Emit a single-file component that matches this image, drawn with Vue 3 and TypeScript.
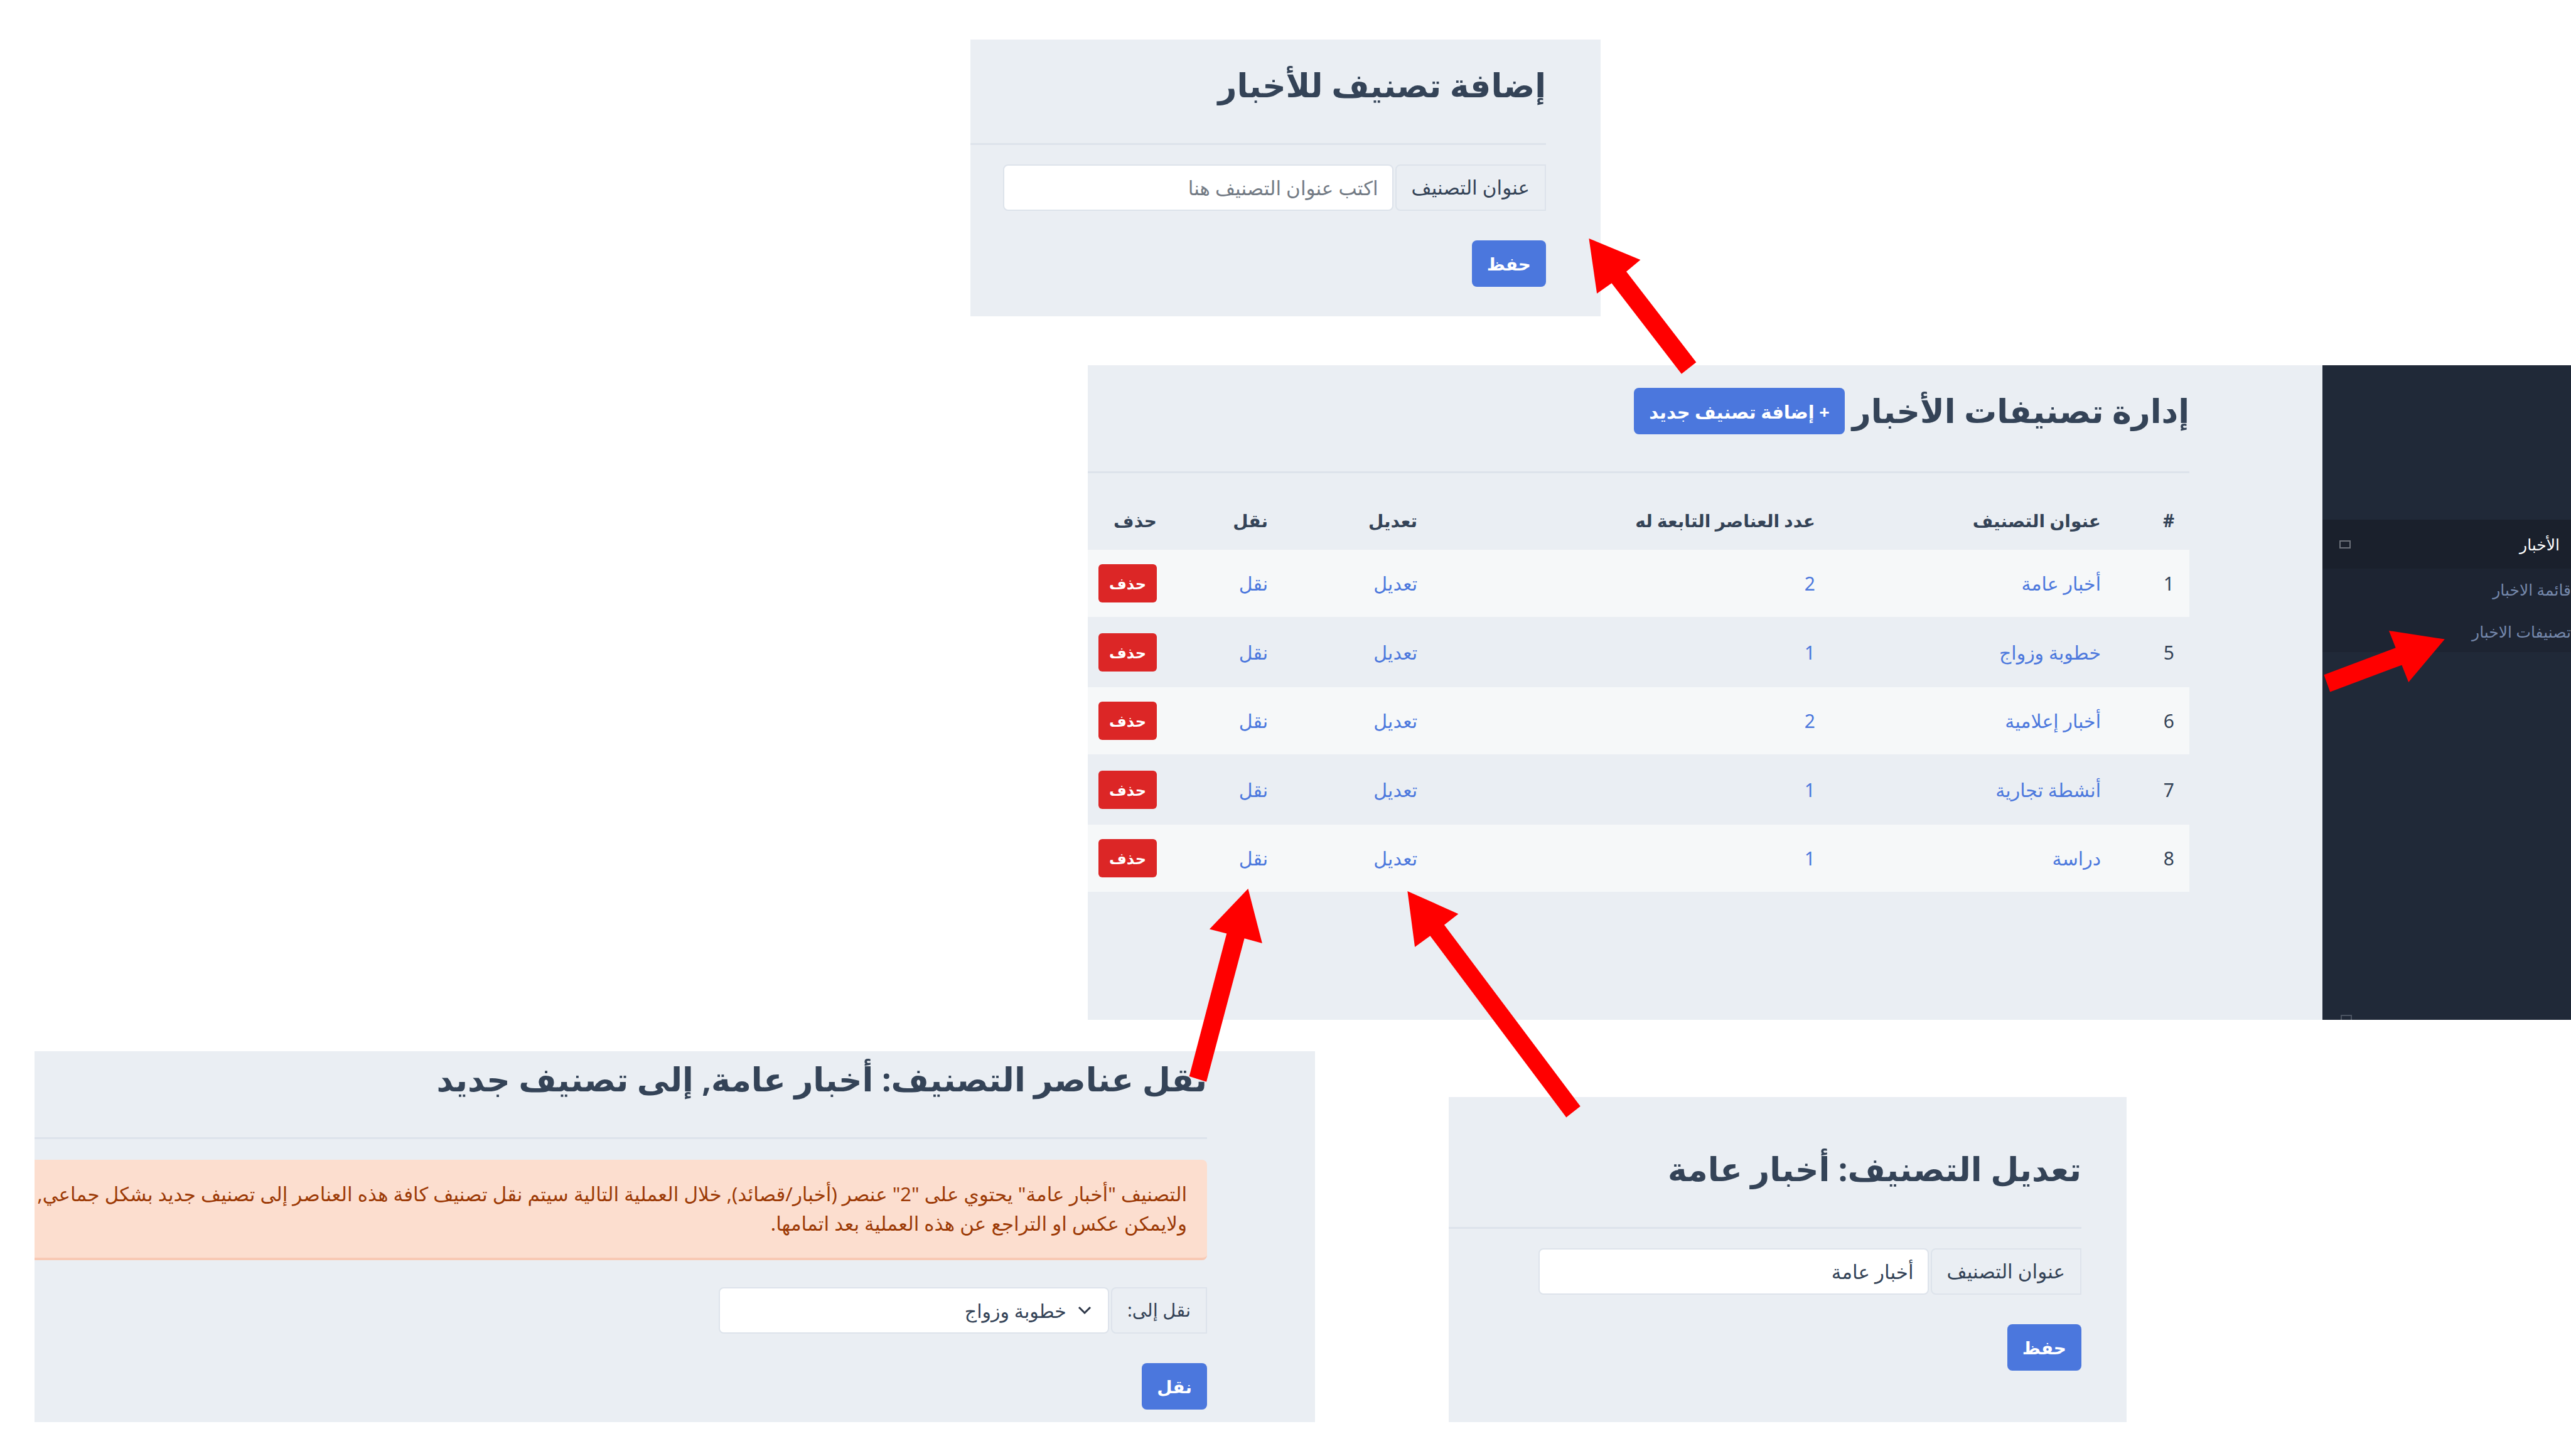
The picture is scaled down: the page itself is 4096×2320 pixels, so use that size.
<script setup lang="ts">
import { ref } from 'vue'

interface Category {
  id: number
  title: string
  count: number
}

const categories: Category[] = [
  { id: 1, title: 'أخبار عامة', count: 2 },
  { id: 5, title: 'خطوبة وزواج', count: 1 },
  { id: 6, title: 'أخبار إعلامية', count: 2 },
  { id: 7, title: 'أنشطة تجارية', count: 1 },
  { id: 8, title: 'دراسة', count: 1 },
]

const newTitle = ref('')
const editedTitle = ref('أخبار عامة')
const target = ref(5)

const arrows: string[] = [
  '2592,389 2676,424 2653,443 2767,591 2743,610 2629,462 2605,479',
  '3988,1043 3897,1029 3908,1057 3791,1101 3801,1129 3918,1085 3929,1113',
  '2036,1450 1973,1516 2001,1523 1940,1756 1968,1765 2030,1531 2059,1539',
  '2296,1454 2379,1491 2356,1509 2578,1805 2555,1823 2333,1527 2308,1545',
]
</script>

<template>
  <main class="stage" dir="ltr">
    <div class="row row-add">
      <section class="panel panel-add" dir="rtl">
        <header class="head"><h1>إضافة تصنيف للأخبار</h1></header>
        <form class="form" @submit.prevent>
          <div class="group">
            <label for="new-title">عنوان التصنيف</label>
            <input id="new-title" v-model="newTitle" class="field" type="text" placeholder="اكتب عنوان التصنيف هنا" />
          </div>
          <button class="btn" type="submit">حفظ</button>
        </form>
      </section>
    </div>

    <div class="row row-manage">
      <section class="panel panel-manage" dir="rtl">
        <header class="head">
          <h1>إدارة تصنيفات الأخبار</h1>
          <button class="btn" type="button">+ إضافة تصنيف جديد</button>
        </header>
        <table>
          <colgroup>
            <col class="c-id" /><col class="c-title" /><col class="c-count" />
            <col class="c-edit" /><col class="c-move" /><col class="c-delete" />
          </colgroup>
          <thead>
            <tr>
              <th scope="col">#</th>
              <th scope="col">عنوان التصنيف</th>
              <th scope="col">عدد العناصر التابعة له</th>
              <th scope="col">تعديل</th>
              <th scope="col">نقل</th>
              <th scope="col">حذف</th>
            </tr>
          </thead>
          <tbody>
            <tr v-for="c in categories" :key="c.id">
              <td>{{ c.id }}</td>
              <td><a href="#">{{ c.title }}</a></td>
              <td><a href="#">{{ c.count }}</a></td>
              <td><a href="#">تعديل</a></td>
              <td><a href="#">نقل</a></td>
              <td><button class="btn-delete" type="button">حذف</button></td>
            </tr>
          </tbody>
        </table>
      </section>
      <nav class="sidebar" dir="rtl">
        <a class="menu-item active" href="#">
          <span>الأخبار</span>
          <i class="box"></i>
        </a>
        <div class="submenu">
          <a href="#">قائمة الاخبار</a>
          <a href="#">تصنيفات الاخبار</a>
        </div>
        <div class="menu-next"><i class="box dim"></i></div>
      </nav>
    </div>

    <div class="row row-forms">
      <section class="panel panel-move" dir="rtl">
        <header class="head"><h1>نقل عناصر التصنيف: أخبار عامة, إلى تصنيف جديد</h1></header>
        <p class="alert">
          التصنيف "أخبار عامة" يحتوي على "2" عنصر (أخبار/قصائد), خلال العملية التالية سيتم نقل تصنيف كافة هذه العناصر إلى تصنيف جديد بشكل جماعي,<br />
          ولايمكن عكس او التراجع عن هذه العملية بعد اتمامها.
        </p>
        <form class="form" @submit.prevent>
          <div class="group">
            <label for="move-target">نقل إلى:</label>
            <div class="select-wrap">
              <select id="move-target" v-model="target" class="field">
                <option v-for="c in categories" :key="c.id" :value="c.id">{{ c.title }}</option>
              </select>
              <svg class="chevron" viewBox="0 0 22 14" aria-hidden="true">
                <path d="M2 2l9 9 9-9" fill="none" stroke="#2d3748" stroke-width="3" />
              </svg>
            </div>
          </div>
          <button class="btn" type="submit">نقل</button>
        </form>
      </section>

      <section class="panel panel-edit" dir="rtl">
        <header class="head"><h1>تعديل التصنيف: أخبار عامة</h1></header>
        <form class="form" @submit.prevent>
          <div class="group">
            <label for="edit-title">عنوان التصنيف</label>
            <input id="edit-title" v-model="editedTitle" class="field" type="text" />
          </div>
          <button class="btn" type="submit">حفظ</button>
        </form>
      </section>
    </div>

    <svg class="arrows" viewBox="0 0 4194 2376" aria-hidden="true">
      <polygon v-for="points in arrows" :key="points" :points="points" fill="#ff0000" />
    </svg>
  </main>
</template>

<style>
body {
  margin: 0;
  background: #ffffff;
}
</style>

<style scoped>
* {
  box-sizing: border-box;
}
.stage {
  position: relative;
  padding: 63px 0 54px;
  overflow: hidden;
  color: #344357;
  font-family: "Noto Sans", "DejaVu Sans", sans-serif;
  font-size: 30px;
  line-height: 47px;
}
.row {
  display: grid;
}
.row-add {
  grid-template-columns: 1546fr 1004fr 1546fr;
}
.row-manage {
  grid-template-columns: 1733fr 1967fr 396fr;
  margin-top: 78px;
}
.row-forms {
  grid-template-columns: 55fr 2040fr 213fr 1080fr 708fr;
  align-items: end;
  margin-top: 50px;
}
.panel {
  background: #eaeef3;
  min-width: 0;
}
.panel-add {
  grid-column: 2;
  padding: 0 87px 47px 0;
}
.panel-manage {
  grid-column: 2;
  padding: 0 212px 204px 0;
}
.panel-move {
  grid-column: 2;
  padding: 0 172px 20px 0;
}
.panel-edit {
  grid-column: 4;
  padding: 0 72px 82px 0;
}
.head {
  display: flex;
  align-items: center;
  gap: 12px;
  padding: 36px 0 55px;
  border-bottom: 3px solid #dde3eb;
}
.panel-manage .head {
  padding-bottom: 59px;
}
.panel-move .head {
  padding-top: 8px;
}
.panel-edit .head {
  padding-top: 78px;
}
h1 {
  margin: 0;
  padding-bottom: 2px;
  font-size: 52px;
  line-height: 72px;
  font-weight: 700;
  white-space: nowrap;
}
.form {
  display: flex;
  flex-direction: column;
  align-items: flex-start;
  gap: 47px;
  padding-top: 31px;
}
.panel-move .form {
  padding-top: 43px;
}
.group {
  display: flex;
  gap: 3px;
}
.group label {
  height: 74px;
  padding: 0 24px;
  border: 2px solid #dde3eb;
  border-radius: 8px 0 0 8px;
  font-size: 31px;
  line-height: 68px;
  white-space: nowrap;
}
.panel-move .group label {
  font-size: 29px;
}
.field {
  width: 622px;
  height: 74px;
  margin: 0;
  padding: 0 22px;
  border: 2px solid #dde3eb;
  border-radius: 8px;
  background: #ffffff;
  color: #344357;
  font: inherit;
  font-size: 31px;
  outline: none;
}
.field::placeholder {
  color: #737b85;
  opacity: 1;
}
.select-wrap {
  position: relative;
}
select.field {
  display: block;
  appearance: none;
  padding-right: 66px;
  font-size: 30px;
}
.chevron {
  position: absolute;
  top: 30px;
  right: 28px;
  width: 22px;
  height: 14px;
  pointer-events: none;
}
.btn {
  height: 74px;
  padding: 0 24px;
  border: 0;
  border-radius: 8px;
  background: #4b77dd;
  color: #ffffff;
  font: inherit;
  font-size: 28px;
  font-weight: 700;
  white-space: nowrap;
}
.head .btn {
  padding: 0 24px;
  font-size: 29px;
}
.alert {
  height: 160px;
  margin: 33px 0 0;
  padding: 31px 32px 0 0;
  border-bottom: 4px solid #f8c9b4;
  border-radius: 0 8px 8px 0;
  background: #fcdecf;
  color: #9c3a06;
  font-size: 31px;
  white-space: nowrap;
}
table {
  width: 100%;
  table-layout: fixed;
  border-collapse: collapse;
}
.c-id { width: 117px; }
.c-title { width: 455px; }
.c-count { width: 634px; }
.c-edit { width: 238px; }
.c-move { width: 177px; }
.c-delete { width: 134px; }
th,
td {
  padding: 0 24px 0 0;
  text-align: right;
  vertical-align: middle;
  white-space: nowrap;
}
th {
  height: 122px;
  padding-top: 28px;
  font-size: 28px;
  line-height: 42px;
}
td {
  height: 112px;
}
tbody tr:nth-child(odd) {
  background: #f6f8f9;
}
tbody tr:nth-child(odd) td {
  height: 107px;
}
a {
  color: #4c78dd;
  text-decoration: none;
}
.btn-delete {
  display: block;
  height: 61px;
  padding: 0 17px;
  border: 0;
  border-radius: 6px;
  background: #dc2626;
  color: #ffffff;
  font: inherit;
  font-size: 24px;
  font-weight: 700;
}
.sidebar {
  display: flex;
  flex-direction: column;
  padding-top: 246px;
  overflow: hidden;
  background: #202938;
  font-size: 25px;
}
.menu-item {
  display: flex;
  align-items: center;
  justify-content: space-between;
  height: 78px;
  padding: 0 18px 0 27px;
  background: #1a202c;
  color: #ffffff;
}
.box {
  display: block;
  width: 18px;
  height: 13px;
  border: 2px solid #6d727b;
}
.box.dim {
  border-color: #4a5361;
}
.submenu {
  display: flex;
  flex-direction: column;
  height: 133px;
  background: #1d2432;
}
.submenu a {
  height: 67px;
  color: #7588ab;
  line-height: 67px;
  white-space: nowrap;
}
.menu-next {
  display: flex;
  justify-content: flex-end;
  height: 8px;
  margin-top: auto;
  padding-left: 29px;
  overflow: hidden;
}
.arrows {
  position: absolute;
  top: 0;
  left: 0;
  width: 100%;
  pointer-events: none;
}
</style>
